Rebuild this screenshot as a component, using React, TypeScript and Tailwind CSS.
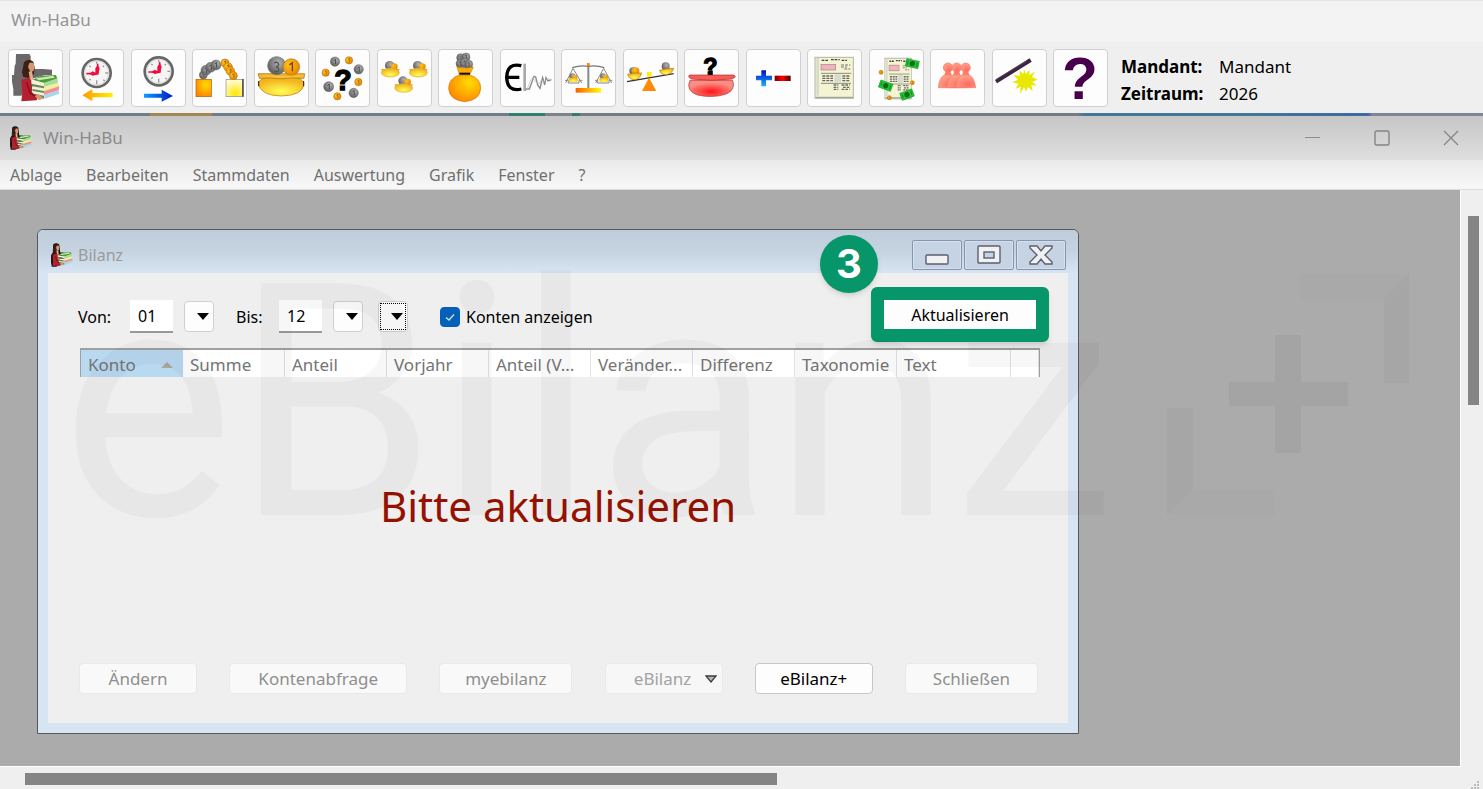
import React, { useState } from 'react';
import clsx from 'clsx';

interface ToolItem {
  label: string;
  icon: React.ReactNode;
}

const MENU = ['Ablage', 'Bearbeiten', 'Stammdaten', 'Auswertung', 'Grafik', 'Fenster', '?'];

const COLUMNS = [
  { title: 'Konto', width: 'w-[102px]', sorted: true },
  { title: 'Summe', width: 'w-[102px]' },
  { title: 'Anteil', width: 'w-[102px]' },
  { title: 'Vorjahr', width: 'w-[102px]' },
  { title: 'Anteil (V...', width: 'w-[102px]' },
  { title: 'Veränder...', width: 'w-[102px]' },
  { title: 'Differenz', width: 'w-[102px]' },
  { title: 'Taxonomie', width: 'w-[102px]' },
  { title: 'Text', width: 'w-[114px]' },
  { title: '', width: 'w-[28px]' },
];

// Gradients shared by all toolbar icons
function IconDefs() {
  return (
    <svg className="absolute h-0 w-0" aria-hidden="true">
      <defs>
        <radialGradient id="gold" cx="50%" cy="75%" r="65%">
          <stop offset="0" stopColor="#ffff55" />
          <stop offset="1" stopColor="#f3b41c" />
        </radialGradient>
        <radialGradient id="orange" cx="65%" cy="30%" r="75%">
          <stop offset="0" stopColor="#ffdc00" />
          <stop offset="1" stopColor="#ff8500" />
        </radialGradient>
        <radialGradient id="silver" cx="60%" cy="35%" r="65%">
          <stop offset="0" stopColor="#b5b5b5" />
          <stop offset="1" stopColor="#5c5c5c" />
        </radialGradient>
        <radialGradient id="coin" cx="35%" cy="35%" r="70%">
          <stop offset="0" stopColor="#ffc21a" />
          <stop offset="1" stopColor="#e88400" />
        </radialGradient>
        <radialGradient id="red" cx="50%" cy="70%" r="55%">
          <stop offset="0" stopColor="#ff1515" />
          <stop offset="1" stopColor="#fb8d84" />
        </radialGradient>
        <radialGradient id="people" cx="60%" cy="75%" r="75%">
          <stop offset="0" stopColor="#ff6a62" />
          <stop offset="1" stopColor="#ffa58a" />
        </radialGradient>
        <radialGradient id="glow" cx="55%" cy="85%" r="80%">
          <stop offset="0" stopColor="#ffe600" />
          <stop offset="1" stopColor="#fffbd0" />
        </radialGradient>
        <linearGradient id="toLeft">
          <stop offset="0" stopColor="#ff9a00" />
          <stop offset="1" stopColor="#fff000" />
        </linearGradient>
        <linearGradient id="toRight">
          <stop offset="0" stopColor="#08a0ff" />
          <stop offset="1" stopColor="#0018c8" />
        </linearGradient>
        <linearGradient id="base">
          <stop offset="0" stopColor="#ff5a00" />
          <stop offset="1" stopColor="#ffff00" />
        </linearGradient>
        <linearGradient id="redBar">
          <stop offset="0" stopColor="#700" />
          <stop offset="0.5" stopColor="#f00" />
          <stop offset="1" stopColor="#400" />
        </linearGradient>
        <linearGradient id="bluePlus" x2="0" y2="1">
          <stop offset="0" stopColor="#0010c0" />
          <stop offset="1" stopColor="#18b4ff" />
        </linearGradient>
      </defs>
    </svg>
  );
}

function Woman({ shadow = false }: { shadow?: boolean }) {
  return (
    <g>
      {shadow ? (
        <path d="M24 15H64L68 22V60H106L132 62V78H110L70 90L40 140H16V120L12 98V78H18L20 50L23 44Z" fill="#6b676b" />
      ) : (
        <path d="M44 34Q60 22 78 34L84 80H102V104L84 150L60 160H36L32 140V95L42 80Z" fill="#111" />
      )}
      <path d="M48 40Q60 26 76 38L80 56L78 74L66 88L46 84L42 70Z" fill="#3d1f16" />
      <path d="M64 42Q78 36 79 52L77 66L67 68L60 54Z" fill="#d39a72" />
      <path d="M62 68L72 66L76 92L66 92Z" fill="#e4ad85" />
      <path d="M40 92L62 86L76 100L72 130L92 140L86 154L40 157L43 130Z" fill="#b5202f" />
      <path d="M56 100L66 132L84 144" stroke="#7b1020" strokeWidth="4" fill="none" />
      <path d="M74 92L100 80L144 78L148 90L108 102Z" fill="#4e9d31" />
      <path d="M84 88L136 80L140 86L92 94Z" fill="#cfe9b4" />
      <path d="M70 94L108 102V112L70 104ZM72 112L108 118V126L72 120ZM74 126L108 132V140L76 134Z" fill="#f4f1dd" />
      <path d="M70 104L108 112V118L72 112ZM74 120L108 126V132L74 126ZM78 134L108 140V149L90 146Z" fill="#6c8a50" />
      <path d="M108 102L148 88L150 102L108 114Z" fill="#a9dca0" />
      <path d="M108 114L150 102L154 112L108 126Z" fill="#f2ee9c" />
      <path d="M108 126L154 112L152 124L108 138Z" fill="#f08f8f" />
      <path d="M108 138L152 124L154 134L110 149Z" fill="#a7d5ee" />
      <path d="M80 142L92 136L106 148L94 154Z" fill="#d39a72" />
    </g>
  );
}

function Clock({ y }: { y: number }) {
  return (
    <g transform={`translate(83 ${y})`}>
      <circle r="42" fill="#f5f5f5" stroke="#666" strokeWidth="8" />
      <circle r="36" fill="none" stroke="#c9c9c9" strokeWidth="2" />
      <path d="M0 -34V-28M0 22V34M26 0H34M-22 -22L-18 -18M20 20L24 24M22 -22L18 -18M-22 22L-18 18" stroke="#999" strokeWidth="4" />
      <path d="M-31 2H3V-28" fill="none" stroke="#f00c3c" strokeWidth="5" />
      <path d="M-22 2L-12 -5L-4 -1V-14L3 -24L9 -14L5 4L-12 8Z" fill="#f00c3c" />
    </g>
  );
}

function Coin({ x, y, r, gray = false }: { x: number; y: number; r: number; gray?: boolean }) {
  return (
    <g>
      <circle cx={x} cy={y} r={r} fill={gray ? 'url(#silver)' : 'url(#coin)'} stroke={gray ? '#666' : '#a66400'} strokeWidth="1.5" />
      <path
        d={`M${x - r / 4} ${y - r / 4}L${x + r / 8} ${y - r / 2}V${y + r / 2}`}
        fill="none"
        stroke={gray ? '#333' : '#7c4300'}
        strokeWidth={r / 6}
      />
    </g>
  );
}

function MiniBowl({ x, y }: { x: number; y: number }) {
  return (
    <g>
      <path d={`M${x - 28} ${y - 2}H${x + 28}L${x + 24} ${y + 5}H${x - 24}Z`} fill="#e2a22a" />
      <circle cx={x - 2} cy={y - 12} r="14" fill="url(#silver)" />
      <circle cx={x + 12} cy={y - 9} r="10" fill="url(#coin)" />
      <ellipse cx={x} cy={y + 9} rx="27" ry="13" fill="url(#gold)" stroke="#dcae48" strokeWidth="2" />
    </g>
  );
}

function Sheet() {
  return (
    <g>
      <rect x="24" y="25" width="115" height="123" fill="#f4f4d2" stroke="#b4b4a4" strokeWidth="3" />
      <path d="M32 27V140" stroke="#d4dccc" strokeWidth="8" />
      <path d="M44 34H66M72 32H98M104 34H120" stroke="#444" strokeWidth="4" strokeDasharray="8 3" />
      <rect x="42" y="46" width="44" height="17" fill="#f0b4bc" stroke="#a58288" strokeWidth="2" />
      <path d="M102 48H130M102 54H120M112 60H130" stroke="#777" strokeWidth="3" strokeDasharray="9 3" />
      <path d="M42 73H132M42 103H132" stroke="#8c8c80" strokeWidth="3" />
      <path d="M46 81H78M46 88H78M46 95H78M106 81H128M106 88H128M106 95H128" stroke="#666" strokeWidth="4" strokeDasharray="9 3" />
      <path d="M80 108H94M80 115H94M80 121H94M104 108H128M108 115H128M104 121H128" stroke="#666" strokeWidth="4" strokeDasharray="8 3" />
      <rect x="82" y="76" width="20" height="24" fill="#d8dad2" />
      <path d="M26 145H138" stroke="#a6a69c" strokeWidth="4" />
    </g>
  );
}

function Note({ x, y, angle }: { x: number; y: number; angle: number }) {
  return (
    <g transform={`translate(${x} ${y}) rotate(${angle})`}>
      <rect x="-19" y="-11" width="38" height="22" fill="#20c832" stroke="#129820" strokeWidth="2" />
      <circle r="8" fill="#0a6a18" />
      <path d="M-14 -6V6M14 -6V6" stroke="#0a8a1c" strokeWidth="3" />
    </g>
  );
}

function Person({ x }: { x: number }) {
  return (
    <g transform={`translate(${x} 0)`}>
      <path d="M-29 116Q-26 84 -10 78H10Q26 84 30 116Z" fill="url(#people)" stroke="#f07864" strokeWidth="2" />
      <path d="M-11 78L-5 62H6L11 78Z" fill="#ff7d6c" />
      <circle cy="56" r="14" fill="url(#people)" stroke="#f07864" strokeWidth="2" />
    </g>
  );
}

const TOOLS: ToolItem[] = [
  { label: 'Mandant', icon: <Woman shadow /> },
  {
    label: 'Voriger Zeitraum',
    icon: (
      <>
        <Clock y={72} />
        <path d="M40 139L70 120V132H131V145H70V157Z" fill="url(#toLeft)" />
      </>
    ),
  },
  {
    label: 'Nächster Zeitraum',
    icon: (
      <>
        <Clock y={67} />
        <path d="M126 141L92 122V134H39V146H92V158Z" fill="url(#toRight)" />
      </>
    ),
  },
  {
    label: 'Buchen',
    icon: (
      <>
        <rect x="12" y="91" width="46" height="52" fill="url(#orange)" stroke="#aa6000" strokeWidth="2" />
        <rect x="102" y="91" width="50" height="52" fill="url(#glow)" stroke="#888" strokeWidth="2" />
        <path d="M153 90V143" stroke="#333" strokeWidth="4" />
        <Coin x={34} y={78} r={12} gray />
        <Coin x={42} y={64} r={15} gray />
        <Coin x={56} y={55} r={15} gray />
        <Coin x={72} y={48} r={15} gray />
        <Coin x={99} y={42} r={12} />
        <Coin x={108} y={54} r={13} />
        <Coin x={115} y={66} r={13} />
        <Coin x={124} y={80} r={12} />
      </>
    ),
  },
  {
    label: 'Kasse',
    icon: (
      <>
        <path d="M12 74H152L150 88H16Z" fill="#f2b32c" stroke="#a86f08" strokeWidth="2" />
        <circle cx="68" cy="50" r="27" fill="url(#silver)" stroke="#666" strokeWidth="2" />
        <path d="M60 42Q72 36 74 46Q74 52 66 54Q76 56 74 64Q70 70 60 66" fill="none" stroke="#555" strokeWidth="4" />
        <Coin x={112} y={54} r={25} />
        <path d="M40 78Q90 84 142 78L152 82Q80 92 14 82Z" fill="#f6c23c" />
        <path d="M13 103Q16 86 48 87Q84 92 116 87Q148 86 150 105Q146 140 82 141Q18 140 13 103Z" fill="url(#gold)" stroke="#b77908" strokeWidth="2" />
        <path d="M14 96V112M149 96V112" stroke="#222" strokeWidth="3" />
      </>
    ),
  },
  {
    label: 'Betrag suchen',
    icon: (
      <>
        <Coin x={60} y={38} r={14} gray />
        <Coin x={102} y={34} r={11} />
        <Coin x={131} y={61} r={14} gray />
        <Coin x={32} y={71} r={11} />
        <Coin x={130} y={99} r={11} />
        <Coin x={41} y={113} r={15} gray />
        <Coin x={116} y={132} r={14} gray />
        <Coin x={67} y={142} r={11} />
        <text x="58" y="124" fontSize="86" fontWeight="bold" fontFamily="Liberation Sans, sans-serif" stroke="#000" strokeWidth="4">?</text>
      </>
    ),
  },
  {
    label: 'Konten',
    icon: (
      <>
        <MiniBowl x={40} y={62} />
        <MiniBowl x={124} y={62} />
        <MiniBowl x={80} y={108} />
      </>
    ),
  },
  {
    label: 'Bestand',
    icon: (
      <>
        <Coin x={68} y={26} r={12} gray />
        <Coin x={84} y={24} r={12} gray />
        <Coin x={66} y={44} r={12} gray />
        <Coin x={80} y={42} r={14} gray />
        <Coin x={92} y={46} r={12} gray />
        <path d="M57 54Q80 62 106 54L96 76H64Z" fill="#ffae00" stroke="#ce7d00" strokeWidth="2" />
        <path d="M64 78Q32 88 32 118Q34 154 80 158Q126 154 128 118Q128 88 96 78Z" fill="url(#orange)" stroke="#cf7400" strokeWidth="2" />
        <path d="M64 74H96" stroke="#111" strokeWidth="6" />
      </>
    ),
  },
  {
    label: 'Verlauf',
    icon: (
      <>
        <path d="M64 50Q22 40 20 85Q22 130 64 120M20 85H58" fill="none" stroke="#000" strokeWidth="10" />
        <path d="M74 44V126" stroke="#aaa" strokeWidth="8" />
        <path d="M77 120L88 120L102 82L107 84L113 108L120 118L128 86L134 108L138 86L144 96L154 92" fill="none" stroke="#888" strokeWidth="4" />
        <path d="M80 124L92 94L98 84L106 98L118 104L124 92L132 98L142 90L156 92" fill="none" stroke="#bbb" strokeWidth="2" />
      </>
    ),
  },
  {
    label: 'Bilanz',
    icon: (
      <>
        <path d="M82 44V118" stroke="#888" strokeWidth="6" />
        <path d="M34 56Q58 48 82 52Q106 48 130 56" fill="none" stroke="#777" strokeWidth="4" />
        <path d="M36 58L14 102M36 58L62 102M128 58L104 102M128 58L152 102" fill="none" stroke="#888" strokeWidth="3" />
        <path d="M12 94H22V102H54V94H64M102 94H110V102H144V94H154" fill="none" stroke="#888" strokeWidth="3" />
        <circle cx="34" cy="82" r="9" fill="url(#silver)" />
        <circle cx="42" cy="84" r="7" fill="url(#coin)" />
        <rect x="23" y="86" width="28" height="13" rx="5" fill="url(#gold)" />
        <circle cx="126" cy="82" r="9" fill="url(#silver)" />
        <circle cx="134" cy="84" r="7" fill="url(#coin)" />
        <rect x="115" y="86" width="28" height="13" rx="5" fill="url(#gold)" />
        <rect x="78" y="42" width="8" height="9" fill="#ff8600" />
        <rect x="44" y="117" width="76" height="14" fill="url(#base)" />
      </>
    ),
  },
  {
    label: 'Saldo',
    icon: (
      <>
        <path d="M12 98L152 74" stroke="#333" strokeWidth="4" />
        <circle cx="30" cy="66" r="11" fill="url(#silver)" />
        <circle cx="38" cy="66" r="11" fill="url(#coin)" />
        <path d="M14 76Q34 70 56 72Q52 90 34 92Q18 92 14 76Z" fill="url(#gold)" stroke="#b77908" strokeWidth="2" />
        <circle cx="128" cy="52" r="12" fill="url(#silver)" />
        <path d="M110 64Q130 58 152 58Q148 74 130 77Q112 78 110 64Z" fill="url(#gold)" stroke="#b77908" strokeWidth="2" />
        <path d="M78 86L100 126H57Z" fill="#ff8a08" />
        <rect x="72" y="69" width="14" height="14" fill="#fff000" />
      </>
    ),
  },
  {
    label: 'Kassenabfrage',
    icon: (
      <>
        <text x="58" y="78" fontSize="70" fontWeight="bold" fontFamily="Liberation Sans, sans-serif" stroke="#000" strokeWidth="4">?</text>
        <path d="M18 94Q4 124 40 138Q84 148 124 136Q156 124 146 94Z" fill="url(#red)" stroke="#a63434" strokeWidth="2" />
        <path d="M16 78H150L154 84L144 90Q82 98 22 90L14 84Z" fill="#fb5b52" stroke="#a63434" strokeWidth="2" />
        <path d="M75 64H86V78H75Z" fill="#000" />
      </>
    ),
  },
  {
    label: 'Plus und Minus',
    icon: (
      <>
        <path d="M46 64H60V80H78V94H60V112H46V94H30V80H46Z" fill="url(#bluePlus)" />
        <rect x="86" y="80" width="48" height="16" fill="url(#redBar)" />
      </>
    ),
  },
  { label: 'Formular', icon: <Sheet /> },
  {
    label: 'Umsatzsteuer',
    icon: (
      <>
        <g transform="translate(31 3) scale(0.69 0.99)">
          <Sheet />
        </g>
        <Note x={130} y={44} angle={12} />
        <Note x={50} y={110} angle={20} />
        <Note x={114} y={137} angle={-20} />
        <Coin x={36} y={70} r={6} />
        <Coin x={130} y={101} r={6} />
        <Coin x={61} y={146} r={6} />
      </>
    ),
  },
  {
    label: 'Personen',
    icon: (
      <>
        <Person x={54} />
        <Person x={80} />
        <Person x={107} />
      </>
    ),
  },
  {
    label: 'Assistent',
    icon: (
      <>
        <path
          d="M96 60L102 76L112 62L112 78L128 68L120 84L137 92L121 98L134 110L118 108L122 127L108 114L102 128L96 114L84 134L86 113L70 120L80 104L60 100L78 92L64 78L84 80L82 64L94 76Z"
          fill="#e8e800"
        />
        <path d="M12 98L116 33" stroke="#3d2444" strokeWidth="12" />
        <path d="M12 91L104 36" stroke="#6d5a50" strokeWidth="2" />
      </>
    ),
  },
  {
    label: 'Hilfe',
    icon: (
      <text x="27" y="149" fontSize="176" fontWeight="bold" fontFamily="Liberation Sans, sans-serif" fill="#48004c">
        ?
      </text>
    ),
  },
];

function AppIcon() {
  return (
    <svg viewBox="32 26 124 136" className="size-6 shrink-0" aria-hidden="true">
      <Woman />
    </svg>
  );
}

function DropButton({ label, focused = false }: { label: string; focused?: boolean }) {
  return (
    <button
      type="button"
      aria-label={label}
      className="relative flex h-[31px] w-[30px] items-center justify-end rounded border border-[#d0d0d0] bg-[#fdfdfd] pr-1"
    >
      {focused && <span className="absolute inset-px border border-dotted border-black" />}
      <svg viewBox="0 0 12 7" className="h-[7px] w-3" aria-hidden="true">
        <path d="M0 0H12L6 7Z" fill="#000" />
      </svg>
    </button>
  );
}

function CaptionButton({ label, children }: { label: string; children: React.ReactNode }) {
  return (
    <button
      type="button"
      aria-label={label}
      className="flex h-[30px] w-[50px] items-center justify-center rounded-xs border border-[#8795b2] bg-[#c5d3e3] shadow-[inset_0_0_0_1px_#d5e0ec]"
    >
      <svg viewBox="0 0 26 22" className="h-[22px] w-[26px]" fill="#f1f1f1" stroke="#5b5f72" strokeWidth="1.4" aria-hidden="true">
        {children}
      </svg>
    </button>
  );
}

function FooterButton({ className, active = false, children }: { className: string; active?: boolean; children: React.ReactNode }) {
  return (
    <button
      type="button"
      disabled={!active}
      className={clsx(
        'flex h-[31px] items-center justify-center rounded border text-[17px]',
        active ? 'border-[#c8c8c8] bg-[#fdfdfd] text-black' : 'border-[#e9e9e9] bg-[#f9f9f9] text-[#8f8f8f]',
        className,
      )}
    >
      {children}
    </button>
  );
}

function Toolbar() {
  return (
    <div className="flex items-center bg-[#efefef] pt-[7px] pb-[6px] pl-2">
      <div className="flex w-[1100px] shrink-0 justify-between">
        {TOOLS.map((tool) => (
          <button
            key={tool.label}
            type="button"
            aria-label={tool.label}
            className="h-[58px] w-[55px] rounded border border-[#d0d0d0] bg-[#fdfdfd]"
          >
            <svg viewBox="3 3 159 168" className="h-full w-full overflow-visible" aria-hidden="true">
              {tool.icon}
            </svg>
          </button>
        ))}
      </div>
      <dl className="ml-[13px] grid grid-cols-[98px_auto] pt-[3px] text-[17px] leading-[27px] text-black">
        <dt className="font-bold">Mandant:</dt>
        <dd>Mandant</dd>
        <dt className="font-bold">Zeitraum:</dt>
        <dd>2026</dd>
      </dl>
    </div>
  );
}

function BilanzWindow() {
  const [from, setFrom] = useState('01');
  const [to, setTo] = useState('12');
  const [showAccounts, setShowAccounts] = useState(true);

  return (
    <section className="relative flex w-[1042px] flex-col rounded-t-md border border-[#55585c] bg-[#d7e4f2] px-[10px] pb-[10px]">
      {/* Title bar */}
      <header className="-mx-[10px] flex h-[43px] items-start rounded-t-md bg-linear-to-b from-[#bfcddb] via-[#c6d3e1] to-[#d7e4f2] px-3">
        <div className="flex items-center gap-1 pt-[13px] text-[#9b9b9b]">
          <AppIcon />
          <h2 className="leading-6">Bilanz</h2>
        </div>
        <div className="ml-auto flex gap-[2px] pt-[10px]">
          <CaptionButton label="Minimieren">
            <rect x="2" y="11" width="22" height="9" rx="1" />
          </CaptionButton>
          <CaptionButton label="Maximieren">
            <rect x="2" y="2" width="22" height="17" rx="1" />
            <rect x="8" y="8" width="10" height="6" fill="#c5d3e3" />
          </CaptionButton>
          <CaptionButton label="Fenster schließen">
            <path d="M2 2H9L13 7L17 2H24V4L17 11L24 18V20H17L13 15L9 20H2V18L9 11L2 4Z" />
          </CaptionButton>
        </div>
      </header>

      <div className="flex h-[450px] flex-col bg-[#efefef] px-[30px] pt-[27px] pb-[29px]">
        {/* Filter row */}
        <div className="flex items-center text-black">
          <label htmlFor="von" className="w-[52px]">Von:</label>
          <input
            id="von"
            value={from}
            onChange={(e) => setFrom(e.target.value)}
            className="mr-[11px] h-[33px] w-[43px] border-b-2 border-[#999] bg-white pl-2 outline-none"
          />
          <DropButton label="Von auswählen" />
          <label htmlFor="bis" className="ml-[22px] w-[43px]">Bis:</label>
          <input
            id="bis"
            value={to}
            onChange={(e) => setTo(e.target.value)}
            className="mr-[11px] h-[33px] w-[43px] border-b-2 border-[#999] bg-white pl-2 outline-none"
          />
          <DropButton label="Bis auswählen" />
          <div className="ml-[15px]">
            <DropButton label="Zeitraum auswählen" focused />
          </div>
          <label className="ml-8 flex items-center gap-[6px]">
            <span className="relative flex size-5">
              <input
                type="checkbox"
                checked={showAccounts}
                onChange={(e) => setShowAccounts(e.target.checked)}
                className="size-5 appearance-none rounded border border-[#0560b8] bg-white checked:bg-[#0560b8]"
              />
              {showAccounts && (
                <svg viewBox="0 0 20 20" className="pointer-events-none absolute inset-0" aria-hidden="true">
                  <path d="M6 10.5L9 13L14 7.5" fill="none" stroke="#cfe3f5" strokeWidth="1.3" />
                </svg>
              )}
            </span>
            Konten anzeigen
          </label>
          <button type="button" className="relative mr-[2px] mb-1 ml-auto h-[29px] w-[152px] bg-[#fdfdfd]">
            Aktualisieren
            <span className="pointer-events-none absolute -inset-[13px] rounded-md border-[13px] border-[#079669] shadow-md" />
          </button>
        </div>

        {/* Table header */}
        <table className="mt-[15px] ml-[2px] w-[960px] table-fixed border-separate border-spacing-0 border-x border-t-2 border-x-[#a0a0a0] border-t-[#a0a0a0]">
          <thead>
            <tr>
              {COLUMNS.map((col, i) => (
                <th
                  key={i}
                  className={clsx(
                    'h-[27px] p-0 pt-[2px] pl-[7px] text-left text-[17px] leading-[25px] font-normal whitespace-nowrap text-[#757575]',
                    col.sorted ? 'bg-[#b9d9f1]' : 'border-r border-[#e0e0e0] bg-white',
                    col.width,
                  )}
                >
                  {col.sorted ? (
                    <span className="flex items-center justify-between pr-[10px]">
                      {col.title}
                      <svg viewBox="0 0 12 6" className="h-[6px] w-3" aria-hidden="true">
                        <path d="M0 6L6 0L12 6Z" fill="#aaa89a" />
                      </svg>
                    </span>
                  ) : (
                    col.title
                  )}
                </th>
              ))}
            </tr>
          </thead>
        </table>

        <div className="flex flex-1 items-center justify-center pb-7">
          <p className="text-[42px] leading-[56px] text-[#961200]">Bitte aktualisieren</p>
        </div>

        {/* Footer actions */}
        <div className="ml-px flex justify-between">
          <FooterButton className="w-[118px]">Ändern</FooterButton>
          <FooterButton className="w-[178px]">Kontenabfrage</FooterButton>
          <FooterButton className="w-[133px]">myebilanz</FooterButton>
          <FooterButton className="w-[118px] gap-[14px] pl-6 opacity-80">
            eBilanz
            <svg viewBox="0 0 12 8" className="h-2 w-3" aria-hidden="true">
              <path d="M1 1H11L6 7Z" fill="#aaa" stroke="#111" strokeWidth="1.3" />
            </svg>
          </FooterButton>
          <FooterButton className="w-[118px]" active>eBilanz+</FooterButton>
          <FooterButton className="w-[133px]">Schließen</FooterButton>
        </div>
      </div>

      {/* Step marker */}
      <span className="absolute top-[5px] left-[782px] flex size-[58px] items-center justify-center rounded-full bg-[#079669] font-[Inter,sans-serif] text-[40px] leading-none font-bold text-white shadow-md">
        3
      </span>
    </section>
  );
}

function Watermark() {
  return (
    <div className="pointer-events-none absolute top-[204px] left-[61px]" aria-hidden="true">
      <span className="block font-[Roboto,sans-serif] text-[326px] leading-[400px] text-black/3">eBilanz</span>
      <svg viewBox="1167 274 243 242" className="absolute top-[70px] left-[1106px] h-[242px] w-[243px]">
        <path d="M1275 335H1301V382H1348V406H1301V453H1275V406H1229V382H1275Z" fill="#000" fillOpacity="0.04" />
        <path d="M1409 274V383H1384V299ZM1167 515V408H1193V490Z" fill="#000" fillOpacity="0.025" />
        <path d="M1300 274H1409L1384 299H1300ZM1275 515H1167L1193 490H1275Z" fill="#000" fillOpacity="0.006" />
      </svg>
    </div>
  );
}

export default function App() {
  return (
    <div className="relative flex min-h-screen flex-col overflow-hidden bg-[#efefef] font-['Noto_Sans',sans-serif] text-base">
      <IconDefs />

      <div className="h-[42px] border-t border-[#e4e4e4] bg-[#f3f3f3] pl-[11px] text-[17px] leading-[37px] text-[#949494]">Win-HaBu</div>
      <Toolbar />
      <div className="h-[3px] bg-[linear-gradient(90deg,#6f7d89_150px,#a08850_150px,#a08850_212px,#6f7d89_212px,#6f7d89_509px,#2f7f70_509px,#2f7f70_545px,#7d8388_545px,#7d8388_572px,#2f7f70_572px,#2f7f70_580px,#737b83_580px,#737b83_1078px,#447796_1084px,#447796_1250px,#3d68a4_1368px,#7c8791_1372px)]" />

      {/* Main window caption */}
      <header className="flex h-11 items-center bg-linear-to-b from-[#c6c6c6] to-[#dfdfdf] pr-6 pb-px pl-[9px] text-[17px] text-[#8a8a8a]">
        <AppIcon />
        <h1 className="ml-[10px]">Win-HaBu</h1>
        <div className="ml-auto flex gap-[53px]">
          <button type="button" aria-label="Minimieren">
            <svg viewBox="0 0 16 16" className="size-4"><path d="M0 7.5H15" stroke="#8d8d8d" /></svg>
          </button>
          <button type="button" aria-label="Maximieren">
            <svg viewBox="0 0 16 16" className="size-4"><rect x="1" y="1" width="14" height="14" rx="1.5" fill="none" stroke="#858585" strokeWidth="1.4" /></svg>
          </button>
          <button type="button" aria-label="Schließen">
            <svg viewBox="0 0 16 16" className="size-4"><path d="M1 1L15 15M15 1L1 15" stroke="#858585" strokeWidth="1.3" /></svg>
          </button>
        </div>
      </header>

      <nav className="flex h-[30px] items-center gap-6 border-b border-[#dcdcdc] bg-linear-to-b from-[#eaeaea] to-[#f8f8f8] pl-[10px] text-[#707070]">
        {MENU.map((item) => (
          <button key={item} type="button">{item}</button>
        ))}
      </nav>

      {/* Workspace with scroll bars */}
      <div className="flex flex-1">
        <main className="flex-1 border-r border-b border-white bg-[#ababab] pt-[39px] pb-8 pl-[37px]">
          <BilanzWindow />
        </main>
        <div className="w-[22px] bg-[#efefef] pt-[26px] pl-[7px]">
          <div className="h-[189px] w-[11px] bg-[#858585]" />
        </div>
      </div>
      <div className="relative h-[22px] bg-[#efefef] pt-[6px] pl-[25px]">
        <div className="h-3 w-[752px] bg-[#858585]" />
        <svg viewBox="0 0 8 8" className="absolute right-1 bottom-0 size-2" aria-hidden="true">
          <path d="M6 0H8V2H6ZM6 3H8V5H6ZM6 6H8V8H6ZM3 3H5V5H3ZM3 6H5V8H3ZM0 6H2V8H0Z" fill="#bdbdbd" />
        </svg>
      </div>

      <Watermark />
    </div>
  );
}
